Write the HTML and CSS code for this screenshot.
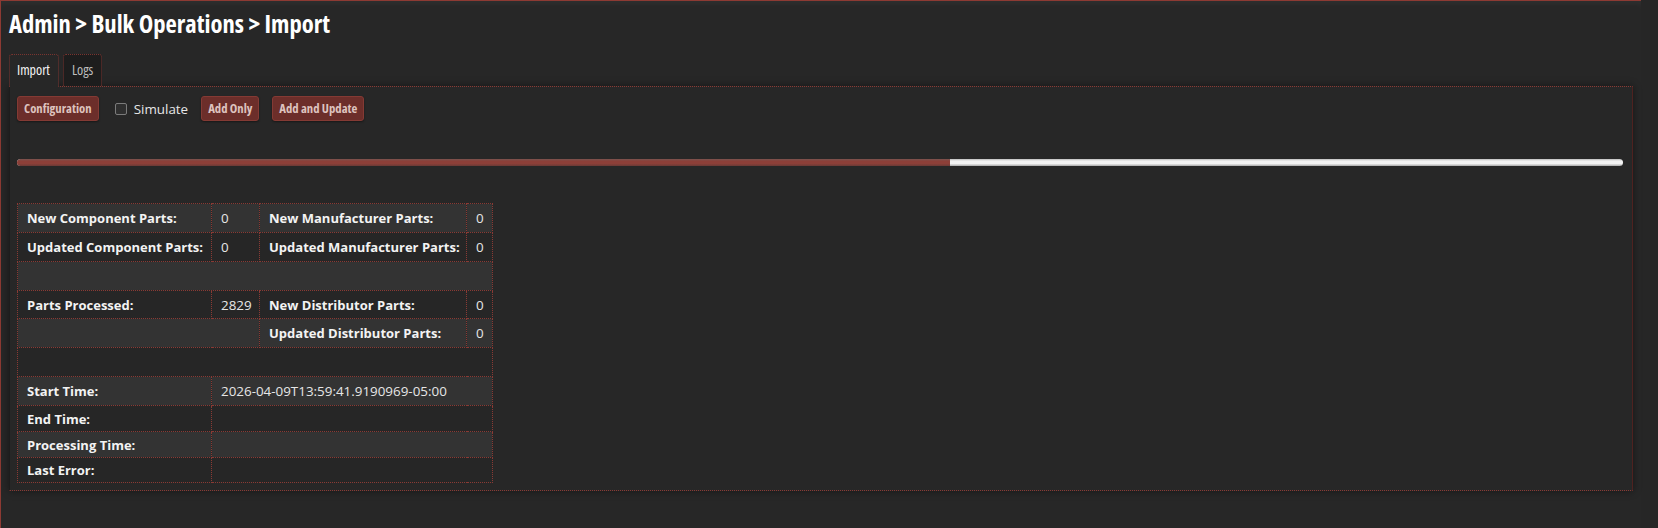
FILE: index.html
```html
<!DOCTYPE html>
<html>
<head>
<meta charset="utf-8">
<title>Admin &gt; Bulk Operations &gt; Import</title>
<link rel="stylesheet" href="styles.css">
</head>
<body>
<div class="page">
  <h1 class="title">Admin &gt; Bulk Operations &gt; Import</h1>
  <div class="tabs">
    <ul class="tab-nav">
      <li class="tab tab-active">Import</li>
      <li class="tab tab-idle">Logs</li>
    </ul>
    <div class="panel">
      <div class="toolbar">
        <button class="btn">Configuration</button>
        <label class="check"><span class="check-box"></span><span class="check-text">Simulate</span></label>
        <button class="btn">Add Only</button>
        <button class="btn">Add and Update</button>
      </div>
      <div class="progress"><div class="progress-fill" style="width:58.1%"></div></div>
      <table class="stats">
        <colgroup>
          <col class="c1"><col class="c2"><col class="c3"><col class="c4">
        </colgroup>
        <tr class="r-tall">
          <td class="lbl">New Component Parts:</td><td class="val">0</td>
          <td class="lbl">New Manufacturer Parts:</td><td class="val">0</td>
        </tr>
        <tr class="r-tall">
          <td class="lbl">Updated Component Parts:</td><td class="val">0</td>
          <td class="lbl">Updated Manufacturer Parts:</td><td class="val">0</td>
        </tr>
        <tr class="r-tall"><td colspan="4"></td></tr>
        <tr class="r-mid">
          <td class="lbl">Parts Processed:</td><td class="val">2829</td>
          <td class="lbl">New Distributor Parts:</td><td class="val">0</td>
        </tr>
        <tr class="r-tall">
          <td colspan="2"></td>
          <td class="lbl">Updated Distributor Parts:</td><td class="val">0</td>
        </tr>
        <tr class="r-tall"><td colspan="4"></td></tr>
        <tr class="r-tall">
          <td class="lbl">Start Time:</td><td class="val" colspan="3">2026-04-09T13:59:41.9190969-05:00</td>
        </tr>
        <tr class="r-short">
          <td class="lbl">End Time:</td><td class="val" colspan="3"></td>
        </tr>
        <tr class="r-short">
          <td class="lbl">Processing Time:</td><td class="val" colspan="3"></td>
        </tr>
        <tr class="r-last">
          <td class="lbl">Last Error:</td><td class="val" colspan="3"></td>
        </tr>
      </table>
    </div>
  </div>
</div>
</body>
</html>
```

FILE: styles.css
```css
* { box-sizing: border-box; }

html, body {
  margin: 0;
  padding: 0;
}

body {
  background: #262626;
  font-family: "Open Sans", "Liberation Sans", sans-serif;
  color: #e8e8e8;
}

.page {
  width: 1641px;
  min-height: 528px;
  background: #272727;
  border-top: 1px solid #8d3a33;
  border-left: 1px solid #8d3a33;
  padding: 0 8px;
  box-shadow: inset 0 5px 6px -3px rgba(255, 255, 255, 0.05);
}

.title {
  margin: 5px 0 0;
  font-size: 24.6px;
  line-height: 36px;
  font-weight: 700;
  font-stretch: 75%;
  color: #ffffff;
}

.tabs {
  margin-top: 12px;
}

.tab-nav {
  list-style: none;
  margin: 0;
  padding: 0;
  display: flex;
  gap: 4px;
}

.tab {
  height: 32px;
  padding: 0 8px 0 7px;
  font-size: 14px;
  line-height: 30px;
  font-stretch: 75%;
  border-top: 1px dotted #7a3530;
  border-left: 1px dotted #7a3530;
  border-right: 1px dotted #7a3530;
  border-radius: 3px 3px 0 0;
}

.tab-active {
  height: 33px;
  margin-bottom: -1px;
  background: #272727;
  color: #f4f4f4;
  font-weight: 500;
  position: relative;
  z-index: 1;
}

.tab-idle {
  background: #1d1d1d;
  color: #bdbdbd;
  padding: 0 8px;
}

.panel {
  border-top: 1px dotted #8a3a34;
  border-bottom: 1px dotted #8a3a34;
  border-left: 1px solid #1d1d1d;
  border-right: 1px solid #4e2220;
  background: #272727;
  padding: 9px 7px 7px 7px;
  box-shadow: 0 0 8px rgba(0, 0, 0, 0.45);
}

.toolbar {
  display: flex;
  align-items: center;
  height: 25px;
}

.btn {
  height: 25px;
  padding: 0 6px;
  margin: 0;
  background: #6c2e2a;
  border: 1px solid #843a34;
  border-radius: 3px;
  color: #dec3bf;
  font-family: "Open Sans", "Liberation Sans", sans-serif;
  font-size: 12.7px;
  font-weight: 700;
  font-stretch: 75%;
  line-height: 23px;
  box-shadow: 0 1px 2px rgba(0, 0, 0, 0.4);
}

.check {
  display: flex;
  align-items: center;
  margin: 0 13px 0 16px;
  font-size: 13.4px;
  color: #e6e6e6;
}

.check-box {
  width: 12px;
  height: 12px;
  border: 1px solid #7b7b7b;
  border-radius: 2px;
  background: #2f2f2f;
  margin-right: 7px;
}

.check + .btn + .btn {
  margin-left: 13px;
}

.progress {
  margin-top: 38px;
  width: 1606px;
  height: 7px;
  border-radius: 4px;
  background: linear-gradient(#bdbdbd 0, #f2f2f2 30%, #f2f2f2 65%, #a9a9a9 100%);
  overflow: hidden;
}

.progress-fill {
  height: 100%;
  background: linear-gradient(#7a5450 0, #8c3f38 30%, #8c3f38 65%, #6a3a36 100%);
}

.stats {
  margin-top: 37px;
  border-collapse: collapse;
  width: 475px;
  font-size: 13px;
  table-layout: fixed;
}

.c1 { width: 194px; }
.c2 { width: 48px; }
.c3 { width: 207px; }
.c4 { width: 26px; }

.stats td {
  border: 1px dotted #8a3a34;
  padding: 0 0 0 9px;
  white-space: nowrap;
  overflow: hidden;
}

.stats tr:nth-child(odd) td { background: #333333; }
.stats tr:nth-child(even) td { background: #262626; }

.r-tall td { height: 29px; }
.r-mid td { height: 28px; }
.r-short td { height: 26px; }
.r-last td { height: 25px; }

.lbl {
  font-weight: 700;
  color: #f3f3f3;
}

.val {
  font-size: 13.4px;
  color: #e6e6e6;
}
```
